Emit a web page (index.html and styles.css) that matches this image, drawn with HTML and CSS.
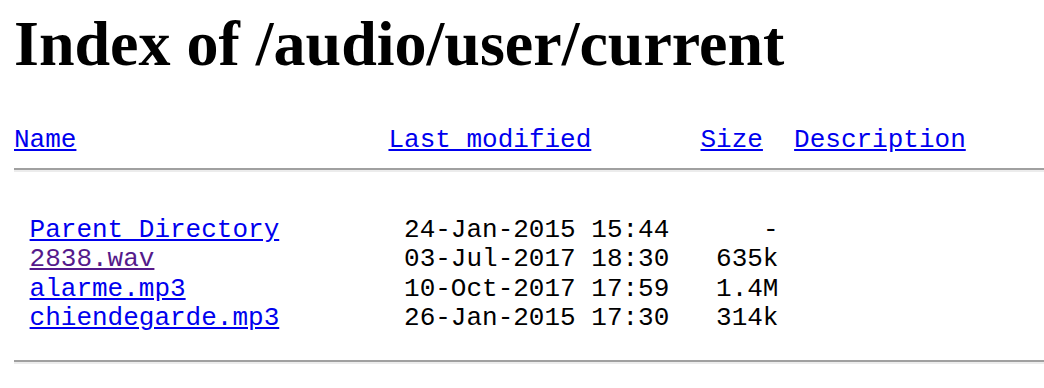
FILE: index.html
```html
<!DOCTYPE html>
<html>
<head>
<meta charset="utf-8">
<title>Index of /audio/user/current</title>
<link rel="stylesheet" href="styles.css">
</head>
<body>
<h1 class="title">Index of /audio/user/current</h1>
<div class="listing">
  <div class="head">
    <a class="link" href="#">Name</a>
    <a class="link" href="#">Last modified</a>
    <a class="link" href="#">Size</a>
    <a class="link" href="#">Description</a>
  </div>
  <hr class="rule rule-top">
  <div class="rows">
    <a class="link" href="#">Parent Directory</a><span class="date">24-Jan-2015 15:44</span><span class="size">-</span>
    <a class="link visited" href="#">2838.wav</a><span class="date">03-Jul-2017 18:30</span><span class="size">635k</span>
    <a class="link" href="#">alarme.mp3</a><span class="date">10-Oct-2017 17:59</span><span class="size">1.4M</span>
    <a class="link" href="#">chiendegarde.mp3</a><span class="date">26-Jan-2015 17:30</span><span class="size">314k</span>
  </div>
  <hr class="rule rule-bottom">
</div>
</body>
</html>
```

FILE: styles.css
```css
html, body {
  margin: 0;
  padding: 0;
  background: #ffffff;
}

body {
  padding-left: 14px;
  color: #000000;
  overflow: hidden;
}

.title {
  font-family: "Liberation Serif", "Times New Roman", serif;
  font-weight: bold;
  font-size: 64px;
  line-height: 74px;
  margin: 7px 0 0 0;
  white-space: nowrap;
}

.listing {
  font-family: "Liberation Mono", "Courier New", monospace;
  font-size: 26px;
  line-height: 29.5px;
  margin-top: 45px;
}

.head {
  display: grid;
  grid-template-columns: 24ch 20ch 6ch auto;
  justify-items: start;
}

.rows {
  display: grid;
  grid-template-columns: 24ch 17ch 7ch;
  padding-left: 1ch;
  justify-items: start;
  margin-top: 44px;
}

.rows .size {
  justify-self: end;
}

.link {
  color: #0000ee;
  text-decoration: underline;
}

.link.visited {
  color: #551a8b;
}

.rule {
  height: 0;
  margin: 0;
  border: 0;
  border-top: 2px solid #a0a0a0;
  border-bottom: 2px solid #ececec;
  width: calc(100vw - 14px);
}

.rule-top {
  margin-top: 12px;
}

.rule-bottom {
  margin-top: 26px;
}
```
